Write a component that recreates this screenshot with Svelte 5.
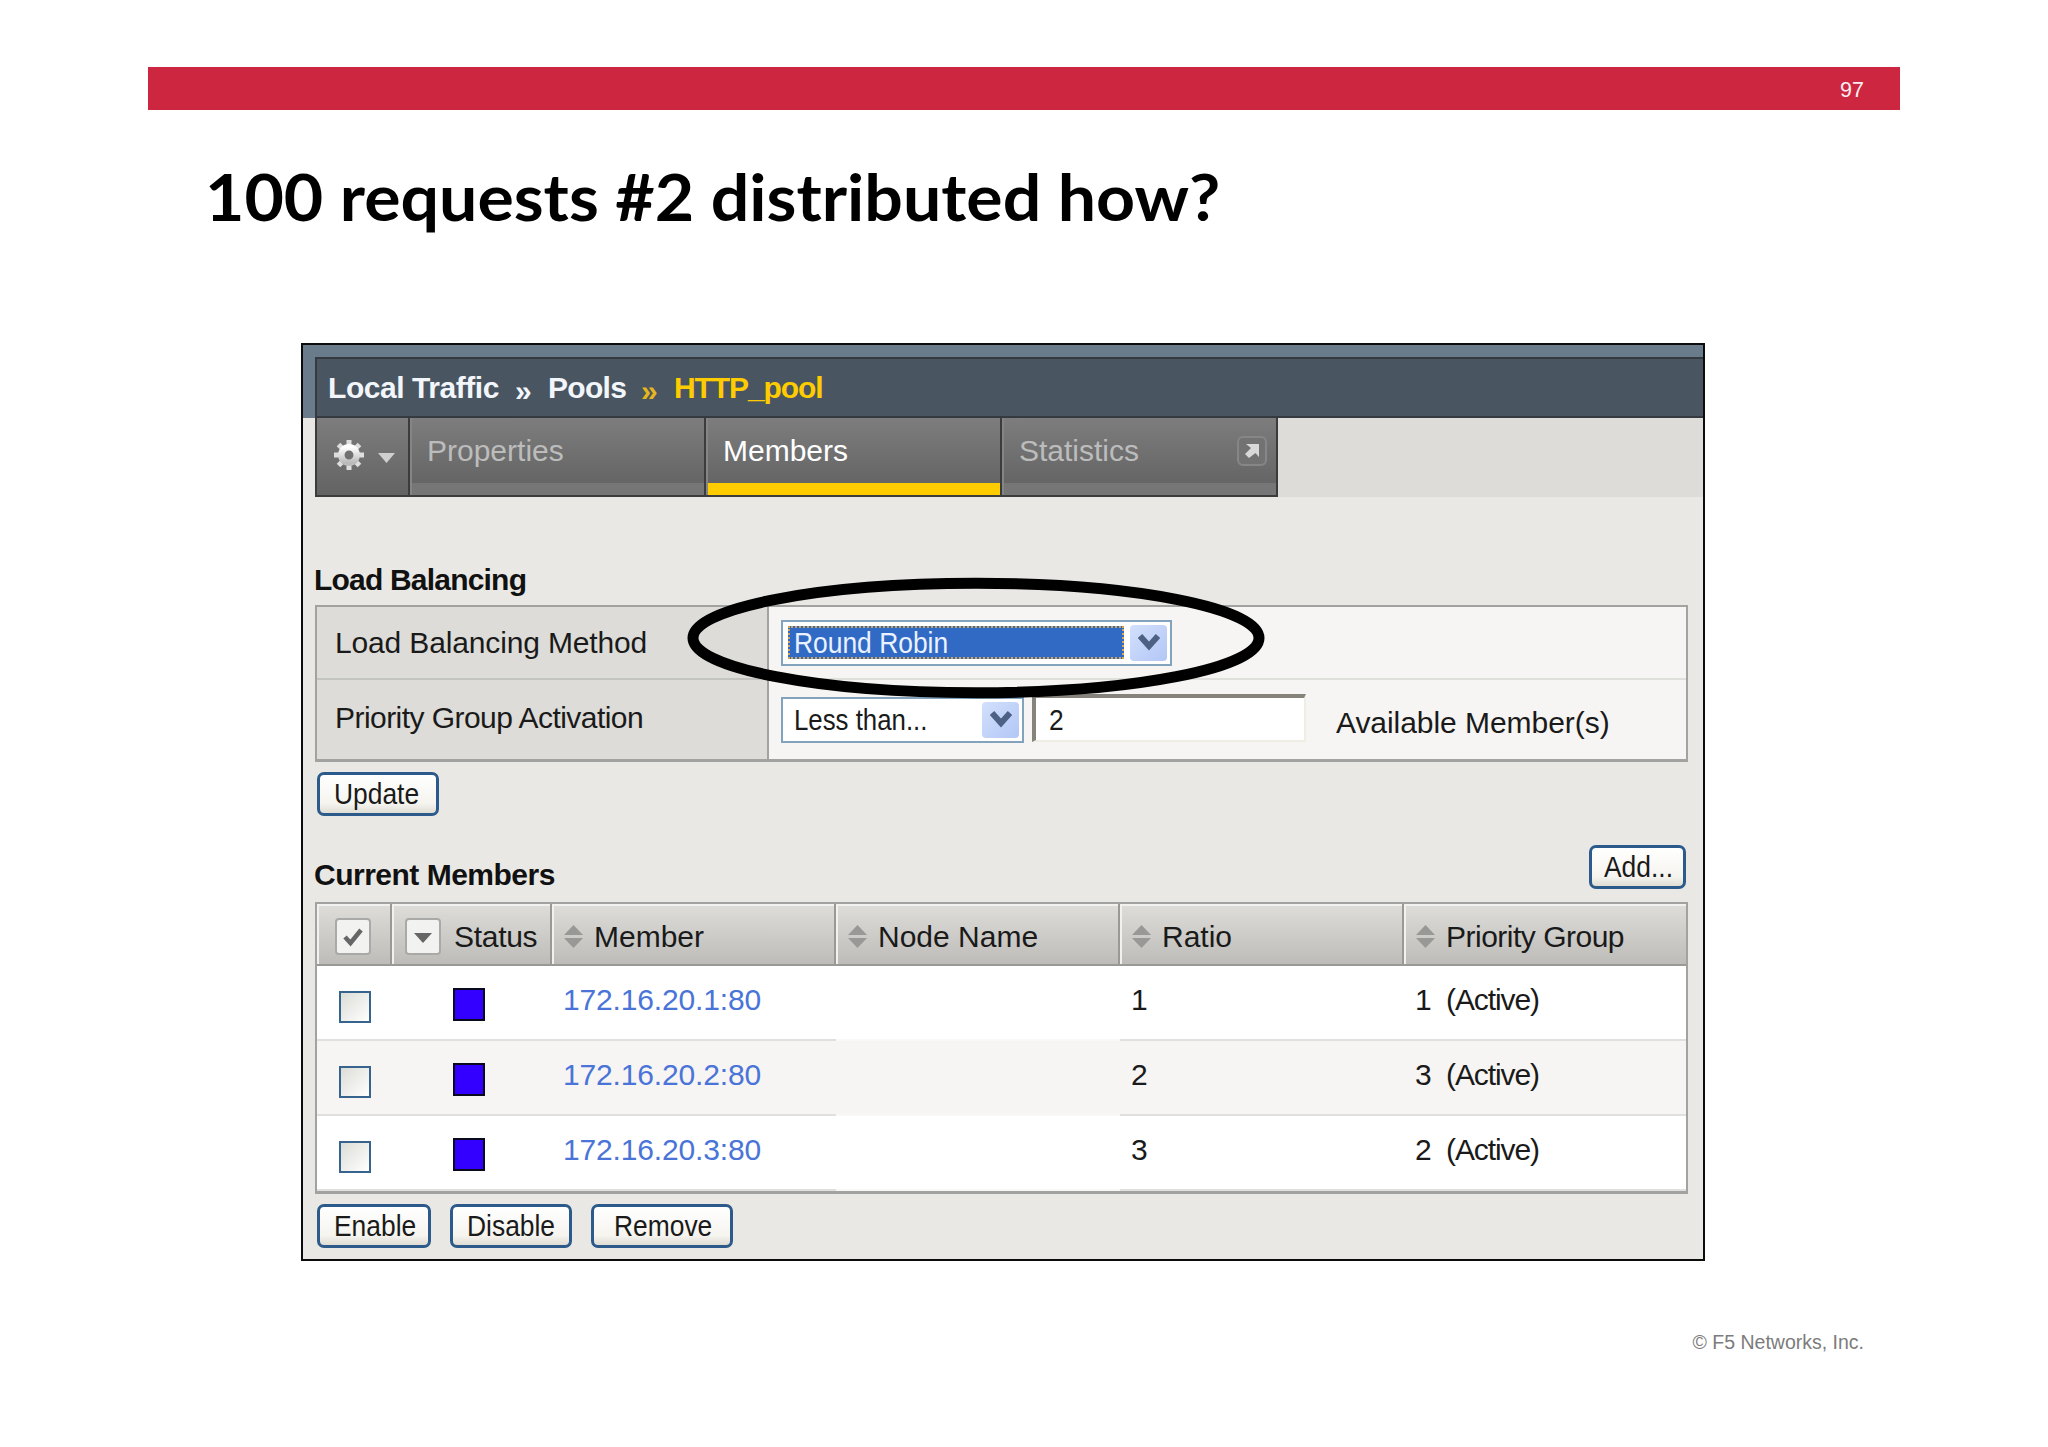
<script lang="ts">
  const members = [
    { address: '172.16.20.1:80', ratio: 1, group: 1 },
    { address: '172.16.20.2:80', ratio: 2, group: 3 },
    { address: '172.16.20.3:80', ratio: 3, group: 2 },
  ];
</script>

{#snippet sortIcon()}
  <svg class="sort" width="19" height="23" viewBox="0 0 19 23">
    <path d="M9.5 0L19 10H0zM9.5 23L0 13H19z" fill="#989896" />
  </svg>
{/snippet}

{#snippet dropArrow()}
  <span class="drop">
    <svg width="22" height="19" viewBox="0 0 22 19">
      <path d="M2 3L11 13L20 3" fill="none" stroke="#4d6185" stroke-width="6" />
    </svg>
  </span>
{/snippet}

<div class="slide">
  <div class="bar">97</div>
  <h1><span>100 requests #2 distributed how?</span></h1>

  <div class="panel">
    <div class="top">
      <div class="crumbs">
        <span class="c1">Local Traffic</span>
        <span class="c2">»</span>
        <span class="c3">Pools</span>
        <span class="c4">»</span>
        <span class="c5">HTTP_pool</span>
      </div>
    </div>

    <div class="tabs">
      <div class="tab gear">
        <svg width="64" height="32" viewBox="0 0 64 32">
          <defs>
            <linearGradient id="metal" x1="0" y1="0" x2="0" y2="1">
              <stop offset="0" stop-color="#fff" />
              <stop offset="1" stop-color="#bbb" />
            </linearGradient>
          </defs>
          <g transform="translate(16 15)">
            <g stroke="#dedede" stroke-width="5">
              <path d="M0 -15V-8M0 8V15M-15 0H-8M8 0H15" />
              <path d="M-10.5 -10.5L-6 -6M6 6L10.5 10.5M-10.5 10.5L-6 6M6 -6L10.5 -10.5" />
            </g>
            <circle r="7.7" fill="none" stroke="url(#metal)" stroke-width="6.5" />
          </g>
          <path d="M45 13H62L53.5 23z" fill="#cfcfcf" />
        </svg>
      </div>
      <div class="tab properties">Properties</div>
      <div class="tab members active">Members</div>
      <div class="tab statistics">
        Statistics
        <svg width="30" height="30" viewBox="0 0 30 30">
          <rect x="1" y="1" width="28" height="28" rx="5" fill="#727272" stroke="#868686" stroke-width="2" />
          <path d="M9 8H22V21L18.5 17L12 22L8 18L14 12z" fill="#d8d8d8" />
        </svg>
      </div>
      <div class="rest"></div>
    </div>

    <div class="content">
      <h2 class="balancing">Load Balancing</h2>
      <div class="settings">
        <div class="label first">Load Balancing Method</div>
        <div class="value first">
          <div class="select method">
            <span class="chosen"><span class="xp">Round Robin</span></span>
            {@render dropArrow()}
          </div>
        </div>
        <div class="label priority">Priority Group Activation</div>
        <div class="value">
          <div class="select less">
            <span class="plain"><span class="xp">Less than...</span></span>
            {@render dropArrow()}
          </div>
          <div class="input"><span class="xp">2</span></div>
          <span class="available">Available Member(s)</span>
        </div>
      </div>
      <div class="button update"><span class="xp">Update</span></div>

      <div class="heading">
        <h2>Current Members</h2>
        <div class="button add"><span class="xp">Add...</span></div>
      </div>

      <div class="table">
        <div class="row head">
          <div class="cell">
            <span class="mini">
              <svg width="22" height="22" viewBox="0 0 22 22">
                <path d="M3 11L8.5 17L19 4" fill="none" stroke="#666" stroke-width="4.5" />
              </svg>
            </span>
          </div>
          <div class="cell status">
            <span class="mini">
              <svg width="22" height="22" viewBox="0 0 22 22">
                <path d="M2 7H20L11 17z" fill="#666" />
              </svg>
            </span>
            <span>Status</span>
          </div>
          <div class="cell sortable">{@render sortIcon()}<span>Member</span></div>
          <div class="cell sortable">{@render sortIcon()}<span>Node Name</span></div>
          <div class="cell sortable">{@render sortIcon()}<span>Ratio</span></div>
          <div class="cell sortable">{@render sortIcon()}<span class="tight">Priority Group</span></div>
        </div>
        {#each members as member}
          <div class="row body">
            <div class="cell"><span class="checkbox"></span></div>
            <div class="cell"><span class="square"></span></div>
            <div class="cell link">{member.address}</div>
            <div class="cell blank"></div>
            <div class="cell ratio">{member.ratio}</div>
            <div class="cell group"><span class="number">{member.group}</span><span>(Active)</span></div>
          </div>
        {/each}
      </div>

      <div class="actions">
        <div class="button enable"><span class="xp">Enable</span></div>
        <div class="button disable"><span class="xp">Disable</span></div>
        <div class="button remove"><span class="xp">Remove</span></div>
      </div>
    </div>

    <svg class="ring" width="578" height="122" viewBox="0 0 578 122">
      <ellipse cx="289" cy="61" rx="283" ry="54.7" fill="none" stroke="#000" stroke-width="11" />
    </svg>
  </div>

  <div class="footer">© F5 Networks, Inc.</div>
</div>

<style>
  :global(body) {
    margin: 0;
    background: #fff;
  }

  .slide {
    box-sizing: border-box;
    width: 2048px;
    height: 1447px;
    padding: 67px 148px 0;
    overflow: hidden;
    font-family: 'Liberation Sans', Arial, sans-serif;
    font-size: 30px;
    color: #1a1a1a;
    white-space: nowrap;
  }

  .slide * {
    box-sizing: border-box;
  }

  .bar {
    width: 1752px;
    height: 43px;
    padding-right: 36px;
    background: #cc2641;
    color: #fbeef0;
    font-size: 21.5px;
    line-height: 47px;
    text-align: right;
  }

  h1 {
    height: 233px;
    margin: 0;
    padding: 47px 0 0 57px;
    font-family: Lato, sans-serif;
    font-size: 65px;
    font-weight: 700;
    line-height: 78px;
    color: #000;
  }

  h1 span {
    display: inline-block;
    transform: scaleX(1.046);
    transform-origin: left;
  }

  .panel {
    position: relative;
    width: 1404px;
    height: 918px;
    margin-left: 153px;
    border: 2px solid #0c0c0c;
    background: #e9e8e4;
  }

  .top {
    height: 73px;
    padding: 12px 0 0 12px;
    background: #6a7b8c;
  }

  .crumbs {
    display: flex;
    height: 61px;
    padding-left: 11px;
    border: 2px solid #353a40;
    border-right: 0;
    background: #4a5562;
    color: #f2f6fb;
    font-weight: 700;
    line-height: 57px;
  }

  .c1 {
    width: 187px;
    letter-spacing: -0.45px;
  }

  .c2 {
    width: 33px;
    padding-top: 3px;
  }

  .c3 {
    width: 93px;
    letter-spacing: -0.7px;
  }

  .c4 {
    width: 33px;
    padding-top: 3px;
    color: #e5b71c;
  }

  .c5 {
    color: #fc0;
    letter-spacing: -1.1px;
  }

  .tabs {
    display: flex;
    height: 79px;
    padding-left: 12px;
  }

  .tab {
    border-right: 2px solid #3c3c3c;
    border-bottom: 2px solid #3c3c3c;
    background: linear-gradient(#7d7d7d, #656565 65px, #767676 65px);
    box-shadow: inset 2px 0 #858585;
    color: #bcbcbc;
    line-height: 66px;
  }

  .gear {
    width: 95px;
    padding: 22px 0 0 16px;
    border-left: 2px solid #3c3c3c;
    background: linear-gradient(#7d7d7d, #636363);
    box-shadow: none;
  }

  .gear svg {
    display: block;
  }

  .properties {
    width: 296px;
    padding-left: 17px;
  }

  .members {
    width: 296px;
    padding-left: 17px;
  }

  .active {
    background: linear-gradient(#7d7d7d, #656565 65px, #fc0 65px);
    color: #fff;
  }

  .statistics {
    display: flex;
    justify-content: space-between;
    width: 276px;
    padding: 0 9px 0 17px;
  }

  .statistics svg {
    margin-top: 18px;
  }

  .rest {
    flex: 1;
    background: #dddcd8;
  }

  .content {
    width: 1385px;
    padding: 59px 0 0 12px;
  }

  h2 {
    margin: 0;
    font-size: 30px;
    font-weight: 700;
    line-height: 52px;
    letter-spacing: -0.5px;
    color: #111;
  }

  .balancing {
    line-height: 49px;
    letter-spacing: -0.8px;
  }

  .content h2 {
    margin: -1px 0 1px -1px;
  }

  .settings {
    display: grid;
    grid-template-columns: 452px 1fr;
    grid-template-rows: 73px 79px;
    height: 157px;
    border: 2px solid #a2a2a0;
    border-bottom-width: 3px;
  }

  .label {
    display: flex;
    align-items: center;
    padding-left: 18px;
    border-right: 2px solid #a2a2a0;
    background: #dddcd8;
    letter-spacing: -0.15px;
  }

  .label.first {
    border-bottom: 2px solid #c3c3c0;
  }

  .label.priority {
    padding-bottom: 4px;
    letter-spacing: -0.55px;
  }

  .value {
    display: flex;
    align-items: center;
    padding-left: 12px;
    background: #f6f5f3;
  }

  .value.first {
    border-bottom: 2px solid #dfdfdc;
  }

  .xp {
    display: inline-block;
    transform: scaleX(0.88);
    transform-origin: left;
  }

  .select {
    display: flex;
    justify-content: space-between;
    height: 46px;
    padding: 3px;
    border: 2px solid #82a3be;
    background: #fff;
    line-height: 36px;
  }

  .method {
    width: 391px;
  }

  .less {
    width: 243px;
  }

  .less .xp {
    transform: scaleX(0.86);
  }

  .chosen {
    width: 336px;
    height: 33px;
    margin: 1px 0 0 2px;
    padding-left: 4px;
    border: 2px dotted #d5a54f;
    background: #316ac5;
    color: #eaf2ff;
    line-height: 30px;
  }

  .plain {
    padding: 0 0 0 8px;
  }

  .drop {
    display: flex;
    align-items: center;
    justify-content: center;
    width: 37px;
    height: 36px;
    border-radius: 4px;
    background: linear-gradient(135deg, #d3e0fc, #b2c7f6);
  }

  .input {
    width: 274px;
    height: 48px;
    margin: -3px 0 0 8px;
    padding-left: 13px;
    border: 4px solid #85837c;
    border-right: 2px solid #efeee4;
    border-bottom: 2px solid #efeee4;
    background: #fff;
    line-height: 44px;
  }

  .available {
    margin-left: 30px;
    padding-top: 6px;
    letter-spacing: -0.05px;
  }

  .button {
    height: 44px;
    border: 3px solid #2c5b8b;
    border-radius: 7px;
    background: linear-gradient(#fff, #f5f4ef 75%, #dfddd4);
    line-height: 38px;
  }

  .update {
    width: 122px;
    margin: 10px 0 0 2px;
    padding-left: 14px;
  }

  .heading {
    display: flex;
    align-items: flex-end;
    justify-content: space-between;
    height: 86px;
  }

  .add {
    width: 97px;
    margin: 0 2px 13px 0;
    padding-left: 12px;
  }

  .table {
    height: 292px;
    border: 2px solid #a2a2a0;
    border-bottom-width: 3px;
  }

  .row {
    display: grid;
    grid-template-columns: 75px 160px 284px 284px 284px 1fr;
  }

  .head {
    height: 62px;
    border-bottom: 2px solid #999996;
    background: linear-gradient(#deddda, #bdbcb8);
  }

  .head .cell {
    display: flex;
    align-items: center;
    border-right: 2px solid #999996;
    box-shadow: inset 2px 2px #f1f1ef;
    padding: 5px 0 0 18px;
  }

  .head .cell:last-child {
    border-right: 0;
  }

  .head .status {
    gap: 13px;
    padding-left: 13px;
    letter-spacing: -0.3px;
  }

  .head .sortable {
    gap: 11px;
    padding-left: 12px;
  }

  .tight {
    letter-spacing: -0.5px;
  }

  .mini {
    display: flex;
    align-items: center;
    justify-content: center;
    width: 36px;
    height: 37px;
    border: 2px solid #a9a9a7;
    border-radius: 4px;
    background: #f2f2f1;
  }

  .body {
    height: 75px;
    background: #fff;
    line-height: 68px;
  }

  .body:nth-child(odd) {
    background: #f6f5f3;
  }

  .body .cell {
    border-bottom: 2px solid #e0e0de;
  }

  .body .blank {
    border-bottom-color: #f8f8f7;
  }

  .checkbox {
    display: block;
    width: 32px;
    height: 32px;
    margin: 25px 0 0 22px;
    border: 2px solid #36648c;
    background: linear-gradient(135deg, #dcdcd7, #fff);
  }

  .square {
    display: block;
    width: 32px;
    height: 33px;
    margin: 22px 0 0 61px;
    border: 2px solid #0a0a1e;
    background: #30f;
  }

  .link {
    padding-left: 11px;
    color: #4a74d8;
    letter-spacing: -0.15px;
  }

  .ratio {
    padding-left: 11px;
  }

  .group {
    display: flex;
    padding-left: 11px;
    letter-spacing: -1.1px;
  }

  .number {
    width: 31px;
  }

  .actions {
    display: flex;
    padding: 10px 0 0 2px;
  }

  .enable {
    width: 114px;
    margin-right: 19px;
    padding-left: 14px;
  }

  .disable {
    width: 122px;
    margin-right: 19px;
    padding-left: 14px;
  }

  .remove {
    width: 142px;
    padding-left: 20px;
  }

  /* drawn over the form, around the method select */
  .ring {
    position: absolute;
    left: 384px;
    top: 232px;
  }

  .footer {
    padding: 70px 36px 0 0;
    color: #7c7c7c;
    font-size: 19.5px;
    line-height: 23px;
    text-align: right;
  }
</style>
